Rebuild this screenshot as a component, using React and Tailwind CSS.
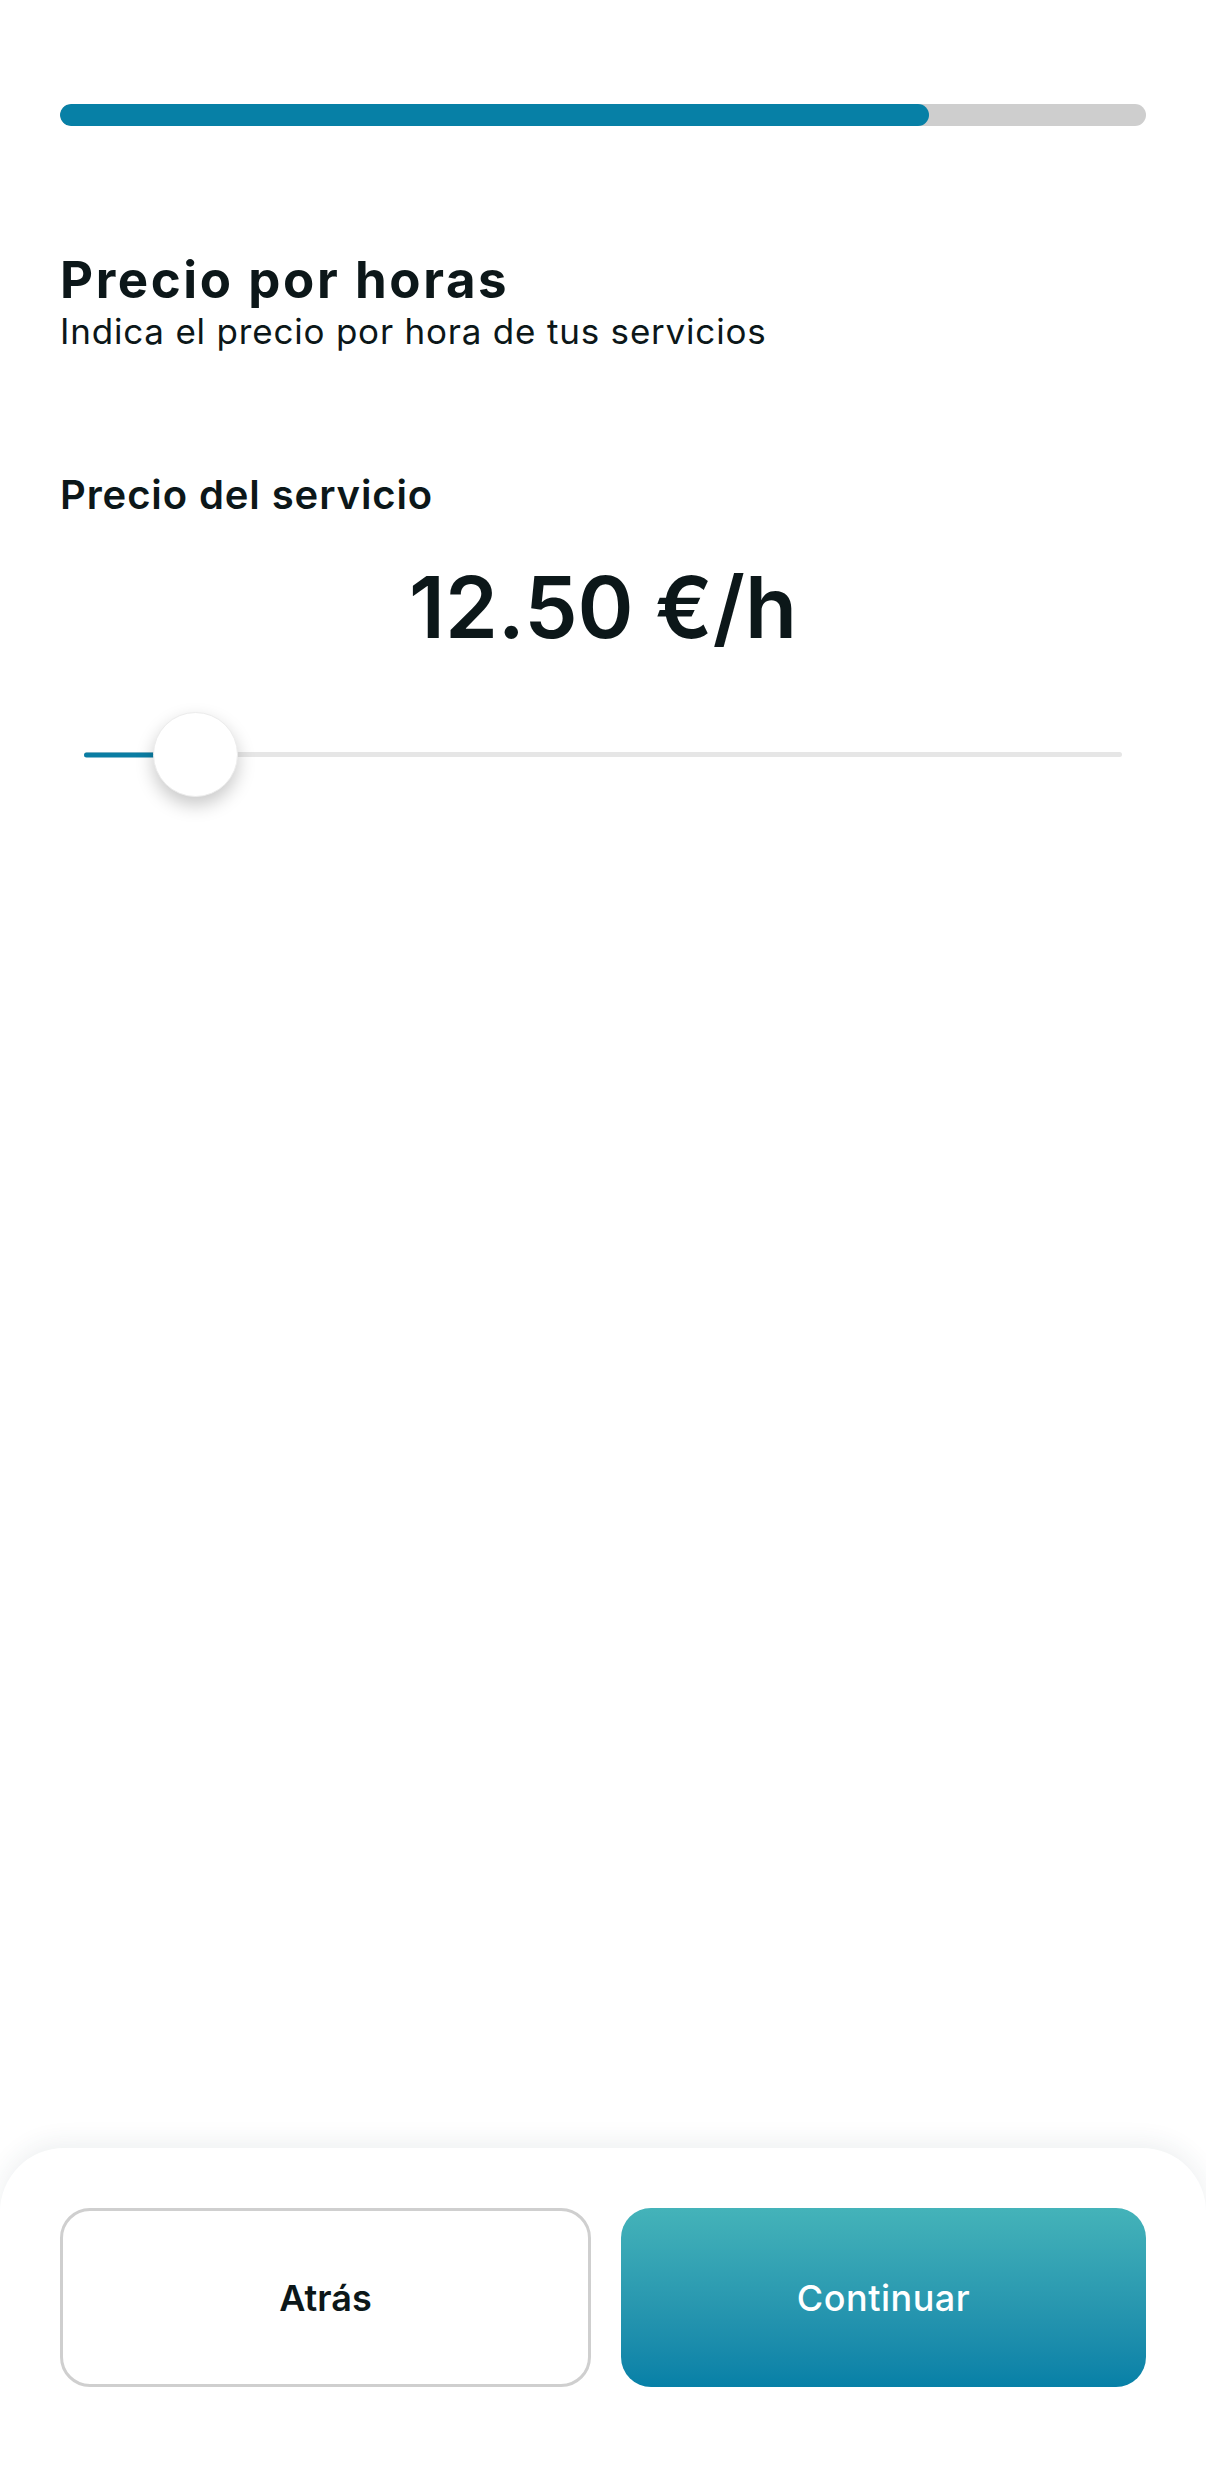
export default function App() {
    const fill = 80; // progress percent

    return (
        <div className="flex flex-col h-[2480px] w-full bg-white text-[#0c1719] font-['Inter',sans-serif]">
            {/* Progress */}
            <div className="px-[60px] pt-[104px]">
                <div className="h-[22px] w-full rounded-full bg-[#cecece] overflow-hidden">
                    <div className="h-full rounded-full bg-[#0780a6]" style={{ width: `${fill}%` }} />
                </div>
            </div>

            {/* Content */}
            <div className="flex-1 px-[60px] pt-[124px]">
                <h1 className="text-[51px] leading-[60px] font-bold tracking-[2.6px]">Precio por horas</h1>
                <p className="mt-[1px] text-[35px] leading-[40px] tracking-[0.8px]">Indica el precio por hora de tus servicios</p>

                <h2 className="mt-[121px] text-[40px] leading-[46px] font-semibold tracking-[0.9px]">Precio del servicio</h2>
                <div className="mt-[40px] text-center text-[85px] leading-[100px] font-semibold">12.50 €/h</div>

                {/* Slider */}
                <div className="mt-[54px] px-[24px]">
                    <div className="relative h-[85px] flex items-center">
                        <div className="h-[5px] w-full rounded-full bg-[#e6e6e6]" />
                        <div className="absolute left-0 top-1/2 -translate-y-1/2 h-[5px] w-[90px] rounded-full bg-[#0a7da3]" />
                        <div className="absolute left-[69px] top-0 h-[85px] w-[85px] rounded-full bg-white border border-[#ececec] shadow-[0_8px_18px_rgba(0,0,0,0.22)]" />
                    </div>
                </div>
            </div>

            {/* Bottom bar */}
            <div className="h-[332px] rounded-t-[64px] bg-white shadow-[0_-6px_24px_rgba(40,60,80,0.08)] px-[60px] pt-[60px] flex gap-[30px]">
                <button className="flex-1 h-[179px] rounded-[30px] border-[3px] border-[#cfcfcf] bg-white text-[36px] font-semibold text-[#0c1719]">
                    Atrás
                </button>
                <button className="flex-1 h-[179px] rounded-[30px] bg-gradient-to-b from-[#44b3b9] to-[#0680a7] text-[36px] font-medium tracking-[0.5px] text-white">
                    Continuar
                </button>
            </div>
        </div>
    );
}
